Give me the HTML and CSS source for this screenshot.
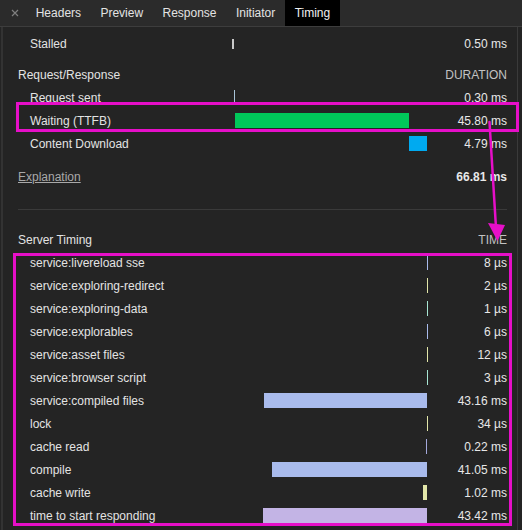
FILE: index.html
```html
<!DOCTYPE html>
<html>
<head>
<meta charset="utf-8">
<link rel="stylesheet" href="styles.css">
</head>
<body>
<div class="panel">
  <div class="tabs">
    <span class="close"><svg width="8" height="8" viewBox="0 0 8 8"><path d="M1 1 L7 7 M7 1 L1 7" stroke="#7f7f7f" stroke-width="1.2" fill="none"/></svg></span>
    <span class="tab">Headers</span>
    <span class="tab">Preview</span>
    <span class="tab">Response</span>
    <span class="tab">Initiator</span>
    <span class="tab active">Timing</span>
  </div>
  <div class="main">
    <div class="content">
      <div class="row first">
        <span class="label indent">Stalled</span>
        <span class="barcell"><span class="bar stalled" style="margin-left:0;width:2px"></span></span>
        <span class="value">0.50 ms</span>
      </div>
      <div class="row head head-req">
        <span class="label">Request/Response</span>
        <span class="barcell"></span>
        <span class="value caps">DURATION</span>
      </div>
      <div class="row">
        <span class="label indent">Request sent</span>
        <span class="barcell"><span class="bar sent" style="margin-left:2px;width:1px"></span></span>
        <span class="value">0.30 ms</span>
      </div>
      <div class="row">
        <span class="label indent">Waiting (TTFB)</span>
        <span class="barcell"><span class="bar waiting" style="margin-left:3px;width:174px"></span></span>
        <span class="value">45.80 ms</span>
      </div>
      <div class="row">
        <span class="label indent">Content Download</span>
        <span class="barcell"><span class="bar download" style="margin-left:177px;width:18px"></span></span>
        <span class="value">4.79 ms</span>
      </div>
      <div class="row explain">
        <span class="label"><span class="link">Explanation</span></span>
        <span class="barcell"></span>
        <span class="value total">66.81 ms</span>
      </div>
      <div class="sep"></div>
      <div class="row head head-srv">
        <span class="label">Server Timing</span>
        <span class="barcell"></span>
        <span class="value caps">TIME</span>
      </div>
      <div class="row">
        <span class="label indent">service:livereload sse</span>
        <span class="barcell right"><span class="bar c-blue" style="width:1px"></span></span>
        <span class="value">8 µs</span>
      </div>
      <div class="row">
        <span class="label indent">service:exploring-redirect</span>
        <span class="barcell right"><span class="bar c-yellow" style="width:1px"></span></span>
        <span class="value">2 µs</span>
      </div>
      <div class="row">
        <span class="label indent">service:exploring-data</span>
        <span class="barcell right"><span class="bar c-teal" style="width:1px"></span></span>
        <span class="value">1 µs</span>
      </div>
      <div class="row">
        <span class="label indent">service:explorables</span>
        <span class="barcell right"><span class="bar c-blue" style="width:1px"></span></span>
        <span class="value">6 µs</span>
      </div>
      <div class="row">
        <span class="label indent">service:asset files</span>
        <span class="barcell right"><span class="bar c-yellow" style="width:1px"></span></span>
        <span class="value">12 µs</span>
      </div>
      <div class="row">
        <span class="label indent">service:browser script</span>
        <span class="barcell right"><span class="bar c-teal" style="width:1px"></span></span>
        <span class="value">3 µs</span>
      </div>
      <div class="row">
        <span class="label indent">service:compiled files</span>
        <span class="barcell right"><span class="bar c-blue wide" style="width:163px"></span></span>
        <span class="value">43.16 ms</span>
      </div>
      <div class="row">
        <span class="label indent">lock</span>
        <span class="barcell right"><span class="bar c-yellow" style="width:1px"></span></span>
        <span class="value">34 µs</span>
      </div>
      <div class="row">
        <span class="label indent">cache read</span>
        <span class="barcell right"><span class="bar c-periwinkle" style="width:1px;margin-right:1px"></span></span>
        <span class="value">0.22 ms</span>
      </div>
      <div class="row">
        <span class="label indent">compile</span>
        <span class="barcell right"><span class="bar c-blue wide" style="width:155px"></span></span>
        <span class="value">41.05 ms</span>
      </div>
      <div class="row">
        <span class="label indent">cache write</span>
        <span class="barcell right"><span class="bar c-yellow wide" style="width:4px"></span></span>
        <span class="value">1.02 ms</span>
      </div>
      <div class="row">
        <span class="label indent">time to start responding</span>
        <span class="barcell right"><span class="bar c-lavender wide" style="width:164px"></span></span>
        <span class="value">43.42 ms</span>
      </div>
    </div>
    <div class="scroll"></div>
  </div>

  <div class="mark mark-ttfb"></div>
  <div class="mark mark-server"></div>
  <svg class="arrow" width="522" height="530" viewBox="0 0 522 530">
    <path d="M489.5 122 L496 228" stroke="#e60fc8" stroke-width="2.5" fill="none" stroke-linecap="round"/>
    <polygon points="488,223 505,225 497.5,241" fill="#e60fc8"/>
  </svg>
</div>
</body>
</html>
```

FILE: styles.css
```css
* { box-sizing: border-box; }

html, body {
  margin: 0;
  padding: 0;
  background: #242424;
}

body {
  font-family: "Liberation Sans", Arial, Helvetica, sans-serif;
  font-size: 12px;
  color: #e3e3e3;
}

.panel {
  position: relative;
  width: 522px;
  height: 530px;
  overflow: hidden;
  background: #242424;
}

.tabs {
  display: flex;
  height: 27px;
  background: #2b2b2b;
  border-bottom: 1px solid #3d3d3d;
}

.close {
  width: 26px;
  display: flex;
  align-items: center;
  justify-content: center;
  padding-left: 4px;
  padding-bottom: 1px;
}

.close svg { display: block; }

.tab {
  padding: 0 9.7px;
  line-height: 26px;
  color: #e3e3e3;
  white-space: nowrap;
}

.tab.active {
  background: #000;
  color: #f0f0f0;
}

.main {
  display: flex;
  height: 503px;
}

.content {
  flex: 1;
  margin-left: 1px;
  border-left: 2px solid #333333;
  padding: 5px 10px 0 15px;
}

.scroll {
  width: 5px;
  border-left: 1px solid #3a3a3a;
}

.row {
  display: grid;
  grid-template-columns: 214px 196px 1fr;
  height: 23px;
  align-items: center;
}

.row.head { height: 22px; }
.head-req { margin-top: 9px; }
.head-srv { margin-top: 19px; }
.row.explain { margin-top: 10px; }

.label {
  white-space: nowrap;
  color: #e3e3e3;
}

.label.indent { padding-left: 12px; }

.value {
  text-align: right;
  white-space: nowrap;
  color: #e8e8e8;
}

.value.caps { color: #c2c2c2; }
.value.total { font-weight: bold; }

.link {
  color: #a9a9a9;
  text-decoration: underline;
}

.barcell {
  display: flex;
  align-items: center;
  height: 100%;
}

.barcell.right { justify-content: flex-end; }

.bar {
  display: block;
  flex: none;
  height: 15px;
}

.bar.stalled { height: 10px; background: #c8c8c8; }
.bar.sent { background: #a9c4d8; }
.bar.waiting { background: #00c85a; }
.bar.download { background: #00aaf0; }

.bar.wide { margin-right: 1px; }

.c-blue { background: #a9bbec; }
.c-yellow { background: #e2e6a9; }
.c-teal { background: #a8e6d3; }
.c-periwinkle { background: #a4a9dc; }
.c-lavender { background: #c3b4e5; }

.sep {
  margin-top: 21px;
  height: 1px;
  background: #3a3a3a;
}

.mark {
  position: absolute;
  border: 3px solid #e60fc8;
  pointer-events: none;
}

.mark-ttfb {
  left: 16px;
  top: 102px;
  width: 503px;
  height: 30px;
}

.mark-server {
  left: 13px;
  top: 253px;
  width: 499px;
  height: 273px;
}

.arrow {
  position: absolute;
  left: 0;
  top: 0;
  pointer-events: none;
}
```
